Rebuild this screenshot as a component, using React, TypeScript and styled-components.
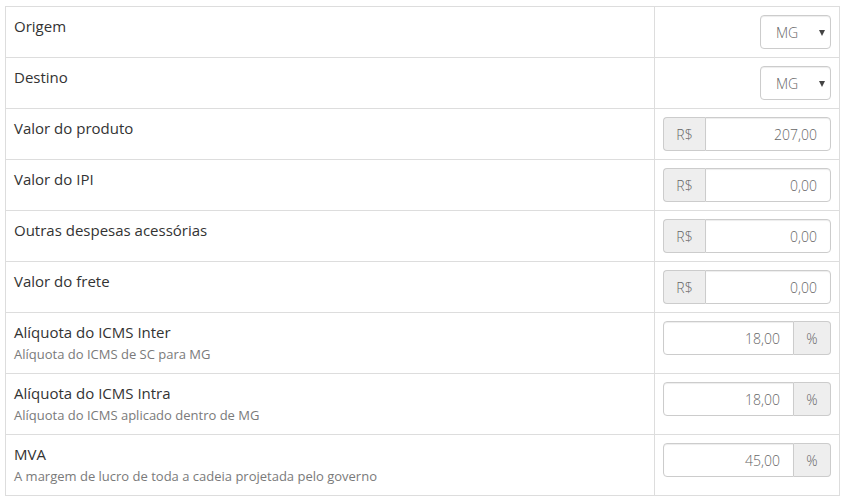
import React from 'react';
import styled, {createGlobalStyle} from 'styled-components';

const GlobalStyle = createGlobalStyle`
  body {
    margin: 0;
    background: #ffffff;
    font-family: "Open Sans", "Liberation Sans", sans-serif;
    color: #333333;
  }
`

type Row = {
    label: string
    hint?: string
    kind: 'select' | 'money' | 'percent'
    value: string
}

const rows: Row[] = [
    {label: 'Origem', kind: 'select', value: 'MG'},
    {label: 'Destino', kind: 'select', value: 'MG'},
    {label: 'Valor do produto', kind: 'money', value: '207,00'},
    {label: 'Valor do IPI', kind: 'money', value: '0,00'},
    {label: 'Outras despesas acessórias', kind: 'money', value: '0,00'},
    {label: 'Valor do frete', kind: 'money', value: '0,00'},
    {label: 'Alíquota do ICMS Inter', hint: 'Alíquota do ICMS de SC para MG', kind: 'percent', value: '18,00'},
    {label: 'Alíquota do ICMS Intra', hint: 'Alíquota do ICMS aplicado dentro de MG', kind: 'percent', value: '18,00'},
    {label: 'MVA', hint: 'A margem de lucro de toda a cadeia projetada pelo governo', kind: 'percent', value: '45,00'},
]

function App() {
    return (
        <Page>
            <GlobalStyle/>
            <Table>
                <tbody>
                {rows.map((row, i) => (
                    <tr key={i}>
                        <LabelCell>
                            <Label>{row.label}</Label>
                            {row.hint && <Hint>{row.hint}</Hint>}
                        </LabelCell>
                        <FieldCell>
                            {row.kind === 'select' ? (
                                <SelectWrap>
                                    <Select defaultValue={row.value}>
                                        <option>MG</option>
                                        <option>SC</option>
                                        <option>SP</option>
                                    </Select>
                                    <Caret/>
                                </SelectWrap>
                            ) : (
                                <InputGroup>
                                    {row.kind === 'money' && <Addon side="left">R$</Addon>}
                                    <Input side={row.kind === 'money' ? 'right' : 'left'} defaultValue={row.value}/>
                                    {row.kind === 'percent' && <Addon side="right">%</Addon>}
                                </InputGroup>
                            )}
                        </FieldCell>
                    </tr>
                ))}
                </tbody>
            </Table>
        </Page>
    );
}

export default App;

const Page = styled.div`
  padding: 6px 0 0 5px;
`

const Table = styled.table`
  width: 835px;
  border-collapse: collapse;
  background: #ffffff;
  border: 1px solid #dddddd;
`

const LabelCell = styled.td`
  vertical-align: top;
  padding: 8px;
  border: 1px solid #dddddd;
`

const FieldCell = styled.td`
  width: 168px;
  vertical-align: top;
  padding: 8px;
  border: 1px solid #dddddd;
  text-align: right;
`

const Label = styled.div`
  font-size: 15px;
  line-height: 23px;
  color: #333333;
`

const Hint = styled.div`
  font-size: 13px;
  line-height: 21px;
  color: #7a7a7a;
`

const SelectWrap = styled.div`
  position: relative;
  display: inline-block;
  width: 71px;
  height: 34px;
`

const Select = styled.select`
  appearance: none;
  -webkit-appearance: none;
  width: 71px;
  height: 34px;
  padding: 0 0 0 15px;
  border: 1px solid #cccccc;
  border-radius: 4px;
  background: #ffffff;
  font-family: "Open Sans", "Liberation Sans", sans-serif;
  font-size: 14px;
  font-weight: 300;
  color: #666666;
  box-shadow: inset 0 1px 1px rgba(0, 0, 0, 0.075);
  outline: none;
`

const Caret = styled.span`
  position: absolute;
  right: 6px;
  top: 15px;
  width: 0;
  height: 0;
  border-left: 3.5px solid transparent;
  border-right: 3.5px solid transparent;
  border-top: 6px solid #444444;
  pointer-events: none;
`

const InputGroup = styled.div`
  display: flex;
  width: 168px;
  height: 34px;
`

const Addon = styled.span<{ side: 'left' | 'right' }>`
  display: flex;
  align-items: center;
  justify-content: center;
  width: ${p => p.side === 'left' ? '42px' : '37px'};
  flex: none;
  box-sizing: border-box;
  background: #eeeeee;
  border: 1px solid #cccccc;
  border-radius: ${p => p.side === 'left' ? '4px 0 0 4px' : '0 4px 4px 0'};
  ${p => p.side === 'left' ? 'border-right: 0;' : 'border-left: 0;'}
  font-size: 14px;
  font-weight: 300;
  color: #666666;
`

const Input = styled.input<{ side: 'left' | 'right' }>`
  flex: 1;
  min-width: 0;
  box-sizing: border-box;
  height: 34px;
  padding: 0 13px 0 12px;
  border: 1px solid #cccccc;
  border-radius: ${p => p.side === 'left' ? '4px 0 0 4px' : '0 4px 4px 0'};
  background: #ffffff;
  box-shadow: inset 0 1px 1px rgba(0, 0, 0, 0.075);
  text-align: right;
  font-family: "Open Sans", "Liberation Sans", sans-serif;
  font-size: 14px;
  font-weight: 300;
  color: #666666;
  outline: none;
`
